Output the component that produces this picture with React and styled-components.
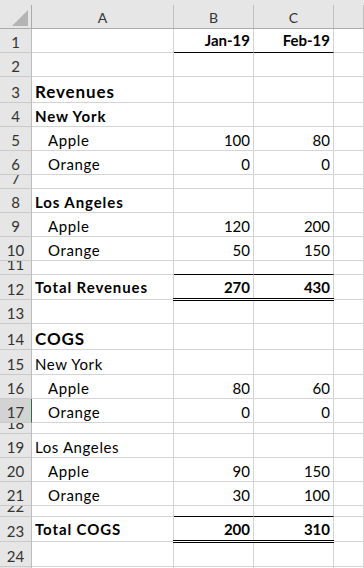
import React from "react";
import styled, { createGlobalStyle } from "styled-components";

const Global = createGlobalStyle`
  html, body {
    margin: 0;
    padding: 0;
    background: #fff;
    overflow: hidden;
  }
`;

const COLS = "32px 142px 80px 80px 1fr";
const GRID = "#d4d4d4";

const Sheet = styled.div`
  width: 364px;
  height: 568px;
  overflow: hidden;
  background: #fff;
  font-family: Lato, "Liberation Sans", sans-serif;
  color: #000;
`;

const HeaderRow = styled.div`
  display: grid;
  grid-template-columns: ${COLS};
  height: 29px;
  box-sizing: border-box;
  padding-top: 5px;
  background: #e6e6e6;
  border-bottom: 1px solid #ababab;
`;

const Corner = styled.div`
  border-right: 1px solid #ababab;
  display: flex;
  align-items: flex-end;
  justify-content: flex-end;
  padding: 0 3px 2px 0;
`;

const ColHead = styled.div`
  border-right: 1px solid #c0c0c0;
  display: flex;
  align-items: flex-end;
  justify-content: center;
  padding-bottom: 1px;
  font-size: 14px;
  line-height: 18px;
  color: #333;
`;

const Row = styled.div`
  display: grid;
  grid-template-columns: ${COLS};
  height: ${(p) => p.$h}px;
`;

const RowHead = styled.div`
  box-sizing: border-box;
  background: ${(p) => (p.$active ? "#d3d3d3" : "#e6e6e6")};
  border-right: 1px solid ${(p) => (p.$active ? "#217346" : "#bcbcbc")};
  border-bottom: 1px solid #cacaca;
  display: flex;
  align-items: flex-end;
  justify-content: center;
  padding-bottom: 1px;
  overflow: hidden;
  font-size: 15px;
  line-height: 18px;
  color: #333;
`;

const Cell = styled.div`
  position: relative;
  box-sizing: border-box;
  border-right: 1px solid ${GRID};
  border-bottom: 1px solid ${(p) => (p.$rule ? "#000" : GRID)};
  display: flex;
  align-items: flex-end;
  justify-content: ${(p) => (p.$num ? "flex-end" : "flex-start")};
  padding: 0 3px ${(p) => (p.$lift ? 3 : 1)}px ${(p) => (p.$indent ? 16 : 3)}px;
  font-size: ${(p) => (p.$big ? 17 : 15)}px;
  font-weight: ${(p) => (p.$bold ? 700 : 400)};
  letter-spacing: ${(p) => (p.$num ? 0 : p.$bold ? 0.9 : 0.6)}px;
  line-height: 18px;
  white-space: nowrap;

  ${(p) =>
    p.$double &&
    `
    &::after {
      content: "";
      position: absolute;
      left: -1px;
      right: -1px;
      bottom: -2px;
      height: 1px;
      border-top: 1px solid #000;
      border-bottom: 1px solid #000;
      background: #fff;
      z-index: 1;
    }
  `}
`;

const rows = [
  { n: 1, h: 24, b: "Jan-19", c: "Feb-19", bold: true, lift: true, rule: true },
  { n: 2, h: 24 },
  { n: 3, h: 26, a: "Revenues", bold: true, big: true },
  { n: 4, h: 24, a: "New York", bold: true },
  { n: 5, h: 24, a: "Apple", indent: true, b: 100, c: 80 },
  { n: 6, h: 24, a: "Orange", indent: true, b: 0, c: 0 },
  { n: 7, h: 14 },
  { n: 8, h: 24, a: "Los Angeles", bold: true },
  { n: 9, h: 24, a: "Apple", indent: true, b: 120, c: 200 },
  { n: 10, h: 24, a: "Orange", indent: true, b: 50, c: 150 },
  { n: 11, h: 14, rule: true },
  { n: 12, h: 25, a: "Total Revenues", b: 270, c: 430, bold: true, lift: true, double: true },
  { n: 13, h: 24 },
  { n: 14, h: 26, a: "COGS", bold: true, big: true },
  { n: 15, h: 25, a: "New York" },
  { n: 16, h: 24, a: "Apple", indent: true, b: 80, c: 60 },
  { n: 17, h: 24, a: "Orange", indent: true, b: 0, c: 0, active: true },
  { n: 18, h: 11 },
  { n: 19, h: 24, a: "Los Angeles" },
  { n: 20, h: 24, a: "Apple", indent: true, b: 90, c: 150 },
  { n: 21, h: 24, a: "Orange", indent: true, b: 30, c: 100 },
  { n: 22, h: 11, rule: true },
  { n: 23, h: 25, a: "Total COGS", b: 200, c: 310, bold: true, lift: true, double: true },
  { n: 24, h: 25 },
  { n: 25, h: 24 },
];

export default function App() {
  return (
    <Sheet>
      <Global />
      <HeaderRow>
        <Corner>
          <svg width="16" height="16" viewBox="0 0 16 16">
            <polygon points="0,16 16,16 16,0" fill="#b4b4b4" />
          </svg>
        </Corner>
        <ColHead>A</ColHead>
        <ColHead>B</ColHead>
        <ColHead>C</ColHead>
        <ColHead />
      </HeaderRow>
      {rows.map((r) => (
        <Row key={r.n} $h={r.h}>
          <RowHead $active={r.active}>{r.n}</RowHead>
          <Cell $bold={r.bold} $big={r.big} $indent={r.indent} $lift={r.lift}>
            {r.a}
          </Cell>
          <Cell $num $bold={r.bold} $lift={r.lift} $rule={r.rule} $double={r.double}>
            {r.b}
          </Cell>
          <Cell $num $bold={r.bold} $lift={r.lift} $rule={r.rule} $double={r.double}>
            {r.c}
          </Cell>
          <Cell />
        </Row>
      ))}
    </Sheet>
  );
}
